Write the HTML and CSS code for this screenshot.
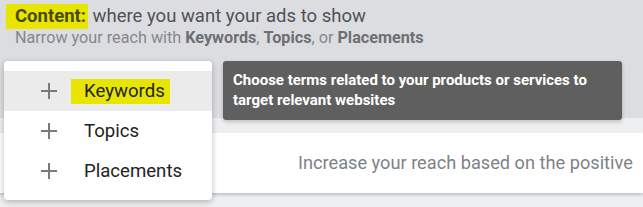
FILE: index.html
```html
<!DOCTYPE html>
<html lang="en">
<head>
    <meta charset="UTF-8">
    <meta name="viewport" content="width=device-width, initial-scale=1.0">
    <title>Content targeting</title>
    <link rel="stylesheet" href="styles.css">
</head>
<body>

    <div class="page">
        <!-- Header -->
        <div class="header">
            <div class="title"><span class="mark title-mark"><b>Content:</b></span> where you want your ads to show</div>
            <div class="subtitle">Narrow your reach with <b>Keywords</b>, <b>Topics</b>, or <b>Placements</b></div>
        </div>

        <div class="gap"></div>

        <div class="lower">
            <div class="card">Increase your reach based on the positive</div>
        </div>

        <!-- Menu -->
        <div class="menu">
            <div class="menu-item active">
                <svg class="plus" width="18" height="18" viewBox="0 0 18 18"><path d="M9 1v16M1 9h16" stroke="#7a7a7a" stroke-width="2" fill="none"/></svg>
                <span class="mark item-mark">Keywords</span>
            </div>
            <div class="menu-item">
                <svg class="plus" width="18" height="18" viewBox="0 0 18 18"><path d="M9 1v16M1 9h16" stroke="#7a7a7a" stroke-width="2" fill="none"/></svg>
                <span class="label">Topics</span>
            </div>
            <div class="menu-item">
                <svg class="plus" width="18" height="18" viewBox="0 0 18 18"><path d="M9 1v16M1 9h16" stroke="#7a7a7a" stroke-width="2" fill="none"/></svg>
                <span class="label">Placements</span>
            </div>
        </div>

        <!-- Tooltip -->
        <div class="tooltip">Choose terms related to your products or services to target relevant websites</div>
    </div>

</body>
</html>
```

FILE: styles.css
```css
body {
    font-family: Roboto, "Liberation Sans", sans-serif;
    background-color: #eeeff1;
    margin: 0;
}
.page {
    position: relative;
    width: 643px;
    height: 207px;
    overflow: hidden;
}
.header {
    background-color: #dcdde1;
    padding: 4px 0 0 6px;
    height: 53px;
}
.title {
    font-size: 18.5px;
    line-height: 25px;
    color: #505155;
}
.title b {
    color: #4a4a10;
}
.mark {
    background-color: #e8e600;
}
.title-mark {
    display: inline-block;
    padding: 0 2px 0 9px;
}
.subtitle {
    font-size: 16.2px;
    line-height: 18px;
    color: #85878b;
    padding-left: 9px;
}
.subtitle b {
    color: #6d6f73;
}
.gap {
    height: 61px;
    background-color: #dcdde1;
}
.lower {
    padding-top: 15px;
}
.card {
    height: 60px;
    line-height: 60px;
    background-color: #fff;
    padding-left: 298px;
    white-space: nowrap;
    font-size: 18.2px;
    color: #7d8287;
    box-shadow: 0 2px 3px rgba(0, 0, 0, 0.2);
}
.menu {
    position: absolute;
    left: 4px;
    top: 61px;
    width: 208px;
    padding: 10px 0 9px;
    background-color: #fff;
    border-radius: 4px;
    box-shadow: 0 2px 6px rgba(0, 0, 0, 0.25);
}
.menu-item {
    display: flex;
    align-items: center;
    height: 40px;
    padding-left: 36px;
    font-size: 18.6px;
    color: #222;
}
.menu-item.active {
    background-color: #ebebeb;
}
.plus {
    flex: none;
}
.label {
    margin-left: 26px;
}
.item-mark {
    margin-left: 13px;
    padding: 0 5px 0 13px;
    line-height: 25px;
}
.tooltip {
    position: absolute;
    left: 223px;
    top: 61px;
    width: 379px;
    padding: 9px 10px 10px;
    background-color: #5f5f5f;
    border-radius: 3px;
    box-shadow: 0 2px 4px rgba(0, 0, 0, 0.2);
    color: #fff;
    font-size: 15px;
    font-weight: 700;
    line-height: 20px;
}
```
